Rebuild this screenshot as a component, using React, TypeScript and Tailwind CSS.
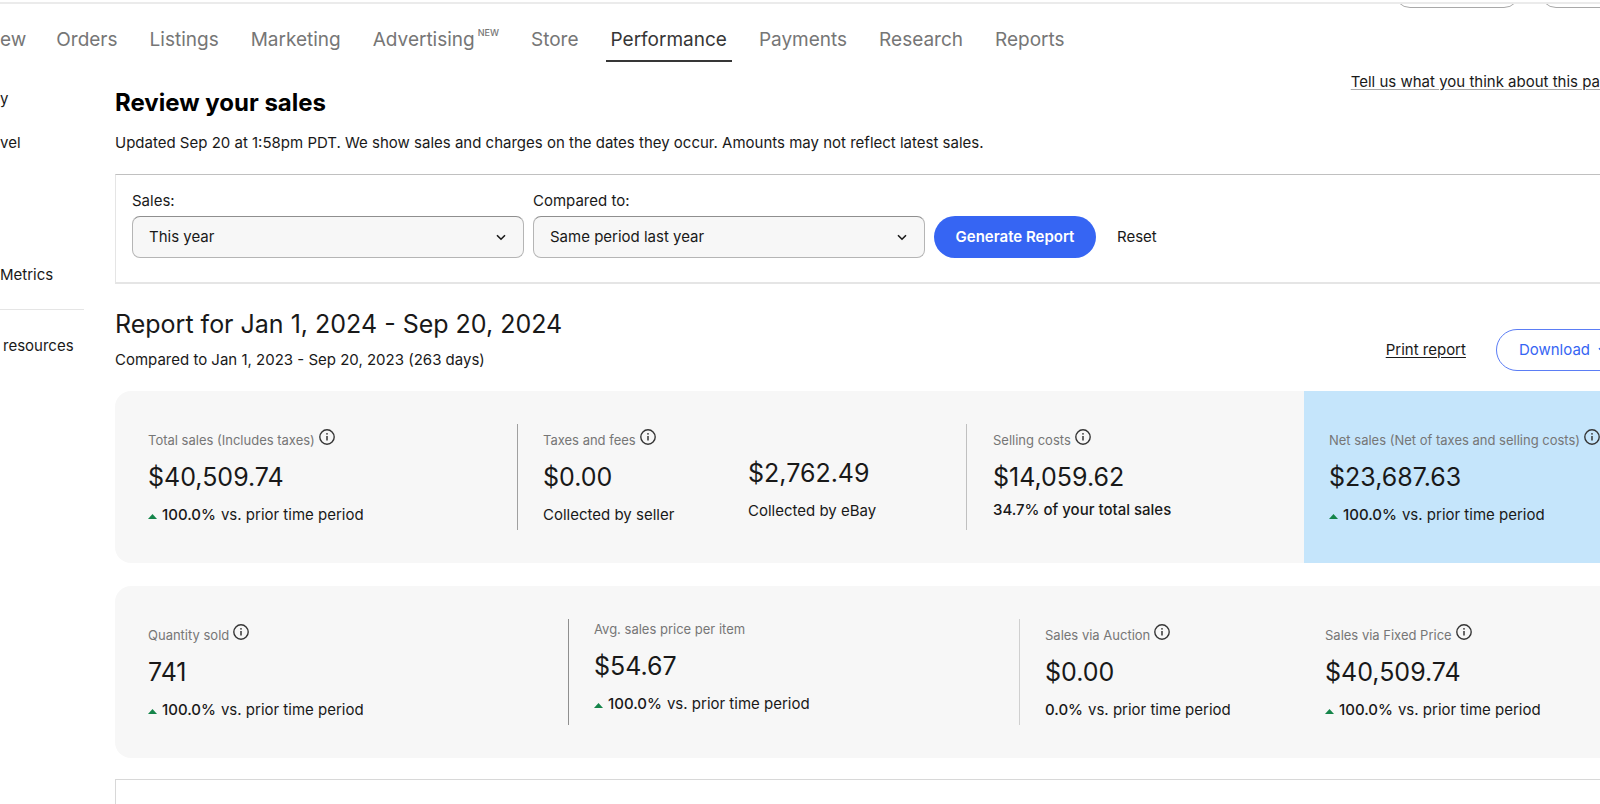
import type { ReactNode } from "react";

const navItems = ["ew", "Orders", "Listings", "Marketing", "Advertising", "Store", "Performance", "Payments", "Research", "Reports"];

function InfoIcon() {
  return (
    <button type="button" aria-label="More information" className="mb-[5px] shrink-0 text-[#363636]">
      <svg className="block size-4" viewBox="0 0 16 16" fill="none">
        <circle cx="8" cy="8" r="7.2" stroke="currentColor" strokeWidth="1.4" />
        <path d="M8 7v4.6" stroke="currentColor" strokeWidth="1.5" />
        <circle cx="8" cy="4.8" r="0.9" fill="currentColor" />
      </svg>
    </button>
  );
}

function Chevron({ className }: { className: string }) {
  return (
    <svg className={className} viewBox="0 0 10 7" fill="none">
      <path d="M1 1.2l4 4 4-4" stroke="currentColor" strokeWidth="1.6" />
    </svg>
  );
}

function Select({ id, label, value }: { id: string; label: string; value: string }) {
  return (
    <div className="w-[392px]">
      <label htmlFor={id} className="block leading-[26px]">
        {label}
      </label>
      <div className="relative mt-[2px]">
        <select
          id={id}
          className="block h-[42px] w-full appearance-none rounded-lg border border-[#b5b5b5] border-t-[#8f8f8f] bg-[#f7f7f7] pl-4"
        >
          <option>{value}</option>
        </select>
        <Chevron className="pointer-events-none absolute top-[18px] right-[18px] h-[7px] w-[10px]" />
      </div>
    </div>
  );
}

function Label({ children, info = true }: { children: ReactNode; info?: boolean }) {
  return (
    <div className="flex items-end gap-1 whitespace-nowrap text-[13px] leading-5 text-[#767676]">
      <span>{children}</span>
      {info && (
        <span className="flex h-[26px] items-end">
          <InfoIcon />
        </span>
      )}
    </div>
  );
}

function Amount({ children }: { children: ReactNode }) {
  return <div className="mt-[11px] text-[25px] leading-8">{children}</div>;
}

function Trend({ percent, up = true }: { percent: string; up?: boolean }) {
  return (
    <div className="mt-[10px] flex items-center whitespace-nowrap leading-6">
      {up && (
        <svg className="mt-[3px] mr-[5px] h-[5px] w-[9px]" viewBox="0 0 9 5">
          <path d="M4.5 0L9 5H0z" fill="#15854a" />
        </svg>
      )}
      <span className="mr-[5px] font-medium">{percent}</span>
      <span>vs. prior time period</span>
    </div>
  );
}

export default function App() {
  return (
    <div className="flex min-h-screen flex-col overflow-hidden bg-white font-['Inter','Liberation_Sans',sans-serif] text-[15px] text-[#191919]">
      <div className="mt-[2px] flex h-[6px] justify-end gap-5 overflow-hidden border-t-2 border-[#ebebeb] pl-8">
        <div className="-mt-[28px] h-8 w-[126px] rounded-full border border-[#a9a9a9]" />
        <div className="-mt-[28px] -mr-[66px] h-8 w-[126px] rounded-full border border-[#a9a9a9]" />
      </div>

      <nav className="flex h-[54px] gap-[22px] text-[19px] leading-6 text-[#767676]">
        {navItems.map((item, i) => (
          <a
            key={item}
            href="#"
            className={
              item === "Performance"
                ? "h-full border-b-2 border-[#363636] px-[5px] pt-5 text-[#363636]"
                : i === 0
                  ? "pt-5 pr-[3px]"
                  : "px-[5px] pt-5"
            }
          >
            {item === "Advertising" ? (
              <span className="flex items-start">
                Advertising<span className="ml-[3px] text-[9px] leading-[9px] font-medium">NEW</span>
              </span>
            ) : (
              item
            )}
          </a>
        ))}
      </nav>

      <div className="flex flex-1">
        <aside className="w-[115px] shrink-0 pt-[27px] leading-5">
          <a href="#" className="block">y</a>
          <a href="#" className="mt-6 block">vel</a>
          <a href="#" className="mt-28 block">Metrics</a>
          <hr className="mt-6 w-[84px] border-[#e5e5e5]" />
          <a href="#" className="mt-[26px] block pl-[3px]">resources</a>
        </aside>

        <main className="flex min-w-0 flex-1 flex-col">
          <div className="flex justify-between">
            <div className="pt-[25px]">
              <h1 className="text-2xl leading-8 font-bold text-black">Review your sales</h1>
              <p className="mt-[14px] leading-5">
                Updated Sep 20 at 1:58pm PDT. We show sales and charges on the dates they occur. Amounts may not reflect latest sales.
              </p>
            </div>
            <a
              href="#"
              className="pt-[10px] leading-5 whitespace-nowrap underline decoration-[#a9a9a9] underline-offset-2"
            >
              Tell us what you think about this pa
            </a>
          </div>

          <section className="mt-[21px] flex h-[110px] items-start gap-[9px] border-t border-b-2 border-l border-[#e5e5e5] border-t-[#c0c0c0] pt-[13px] pl-4">
            <Select id="sales" label="Sales:" value="This year" />
            <Select id="compared" label="Compared to:" value="Same period last year" />
            <button type="button" className="mt-7 h-[42px] w-[162px] rounded-full bg-[#3665f3] font-semibold text-white">
              Generate Report
            </button>
            <button type="button" className="mt-7 ml-3 h-[42px]">Reset</button>
          </section>

          <div className="mt-6 flex h-[83px] items-start justify-between">
            <div>
              <h2 className="text-[25px] leading-8">Report for Jan 1, 2024 - Sep 20, 2024</h2>
              <p className="mt-[10px] leading-5">Compared to Jan 1, 2023 - Sep 20, 2023 (263 days)</p>
            </div>
            <div className="mt-[21px] -mr-[31px] flex items-center gap-[30px]">
              <a href="#" className="underline underline-offset-2">Print report</a>
              <button
                type="button"
                className="flex h-[42px] items-center gap-2 rounded-full border border-[#5b7df5] px-[22px] text-[#3665f3]"
              >
                Download
                <Chevron className="h-[7px] w-[10px]" />
              </button>
            </div>
          </div>

          <section className="grid grid-cols-[403fr_449fr_337fr_296fr] overflow-hidden rounded-l-2xl bg-[#f7f7f7]">
            <div className="my-[33px] border-r border-[#a0a0a0] pb-[3px] pl-[33px]">
              <Label>Total sales (Includes taxes)</Label>
              <Amount>$40,509.74</Amount>
              <Trend percent="100.0%" />
            </div>
            <div className="my-[33px] flex border-r border-[#c0c0c0] pb-[3px] pl-[25px]">
              <div className="w-[205px]">
                <Label>Taxes and fees</Label>
                <Amount>$0.00</Amount>
                <div className="mt-[10px] leading-6">Collected by seller</div>
              </div>
              <div className="pt-[22px]">
                <Amount>$2,762.49</Amount>
                <div className="mt-[10px] leading-6">Collected by eBay</div>
              </div>
            </div>
            <div className="my-[33px] pl-[26px]">
              <Label>Selling costs</Label>
              <Amount>$14,059.62</Amount>
              <div className="mt-[5px] leading-6 font-medium">34.7% of your total sales</div>
            </div>
            <div className="min-w-0 bg-[#c5e5fb] py-[33px] pl-[25px]">
              <Label>Net sales (Net of taxes and selling costs)</Label>
              <Amount>$23,687.63</Amount>
              <Trend percent="100.0%" />
            </div>
          </section>

          <section className="mt-[23px] grid grid-cols-[454fr_451fr_305fr_275fr] rounded-l-2xl bg-[#f7f7f7]">
            <div className="my-[33px] border-r border-[#8f8f8f] pb-[3px] pl-[33px]">
              <Label>Quantity sold</Label>
              <Amount>741</Amount>
              <Trend percent="100.0%" />
            </div>
            <div className="my-[33px] border-r border-[#d0d0d0] pl-[25px]">
              <Label info={false}>Avg. sales price per item</Label>
              <Amount>$54.67</Amount>
              <Trend percent="100.0%" />
            </div>
            <div className="my-[33px] pl-[25px]">
              <Label>Sales via Auction</Label>
              <Amount>$0.00</Amount>
              <Trend percent="0.0%" up={false} />
            </div>
            <div className="my-[33px]">
              <Label>Sales via Fixed Price</Label>
              <Amount>$40,509.74</Amount>
              <Trend percent="100.0%" />
            </div>
          </section>

          <div className="mt-[21px] min-h-6 flex-1 border-t border-l border-[#d8d8d8]" />
        </main>
      </div>
    </div>
  );
}
